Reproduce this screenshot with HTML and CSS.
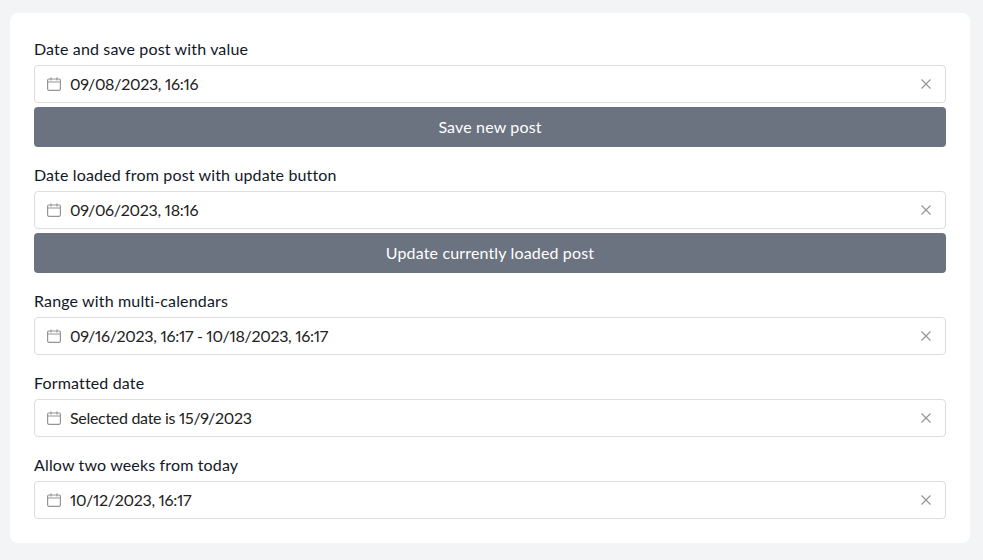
FILE: index.html
```html
<!DOCTYPE html>
<html lang="en">
<head>
    <meta charset="UTF-8">
    <meta name="viewport" content="width=device-width, initial-scale=1">
    <title>Date picker</title>
    <link rel="stylesheet" href="styles.css">
</head>
<body>
    <svg class="sprite" xmlns="http://www.w3.org/2000/svg" width="0" height="0">
        <symbol id="icon-calendar" viewBox="0 0 14 14">
            <path d="M1.8 2h10.4a1.2 1.2 0 0 1 1.2 1.2v8.9a1.2 1.2 0 0 1-1.2 1.2H1.8a1.2 1.2 0 0 1-1.2-1.2V3.2A1.2 1.2 0 0 1 1.8 2zM.6 5h12.8M4 .4v3M10 .4v3"/>
        </symbol>
        <symbol id="icon-clear" viewBox="0 0 12 12">
            <path d="M1.5 1.5l9 9M10.5 1.5l-9 9"/>
        </symbol>
    </svg>
    <div class="card">
        <div class="field">
            <label class="field__label">Date and save post with value</label>
            <div class="picker">
                <svg class="picker__calendar"><use href="#icon-calendar"/></svg>
                <span class="picker__value">09/08/2023, 16:16</span>
                <svg class="picker__clear"><use href="#icon-clear"/></svg>
            </div>
            <button class="btn">Save new post</button>
        </div>
        <div class="field">
            <label class="field__label">Date loaded from post with update button</label>
            <div class="picker">
                <svg class="picker__calendar"><use href="#icon-calendar"/></svg>
                <span class="picker__value">09/06/2023, 18:16</span>
                <svg class="picker__clear"><use href="#icon-clear"/></svg>
            </div>
            <button class="btn">Update currently loaded post</button>
        </div>
        <div class="field">
            <label class="field__label">Range with multi-calendars</label>
            <div class="picker">
                <svg class="picker__calendar"><use href="#icon-calendar"/></svg>
                <span class="picker__value">09/16/2023, 16:17 - 10/18/2023, 16:17</span>
                <svg class="picker__clear"><use href="#icon-clear"/></svg>
            </div>
        </div>
        <div class="field">
            <label class="field__label">Formatted date</label>
            <div class="picker">
                <svg class="picker__calendar"><use href="#icon-calendar"/></svg>
                <span class="picker__value">Selected date is 15/9/2023</span>
                <svg class="picker__clear"><use href="#icon-clear"/></svg>
            </div>
        </div>
        <div class="field">
            <label class="field__label">Allow two weeks from today</label>
            <div class="picker">
                <svg class="picker__calendar"><use href="#icon-calendar"/></svg>
                <span class="picker__value">10/12/2023, 16:17</span>
                <svg class="picker__clear"><use href="#icon-clear"/></svg>
            </div>
        </div>
    </div>
</body>
</html>
```

FILE: styles.css
```css
body {
    background-color: #f3f4f6;
    color: #111827;
    font-family: Lato, "Noto Sans", sans-serif;
    font-size: 16px;
    line-height: 24px;
    letter-spacing: 0.15px;
    margin: 0;
    padding: 13px 13px 17px 10px;
}

.sprite {
    display: block;
    position: absolute;
}

.card {
    background-color: #ffffff;
    border-radius: 8px;
    padding: 24px;
    display: flex;
    flex-direction: column;
    gap: 16px;
}

.field {
    display: flex;
    flex-direction: column;
}

.field__label {
    margin-bottom: 4px;
}

.picker {
    background-color: #ffffff;
    border: 1px solid #dddddd;
    border-radius: 4px;
    box-sizing: border-box;
    height: 38px;
    display: flex;
    align-items: center;
    padding: 0 12px;
}

.picker__calendar {
    width: 14px;
    height: 14px;
    fill: none;
    stroke: #959595;
    stroke-width: 1.2;
    flex: none;
}

.picker__value {
    margin-left: 9px;
    flex: 1;
    font-size: 16px;
    font-variant-numeric: proportional-nums;
    letter-spacing: -0.3px;
    color: #212121;
}

.picker__clear {
    width: 12px;
    height: 12px;
    fill: none;
    stroke: #959595;
    stroke-width: 1.2;
    flex: none;
    margin-right: 1px;
}

.btn {
    background-color: #6b7280;
    border: none;
    border-radius: 4px;
    color: #ffffff;
    font-family: inherit;
    font-size: 16px;
    letter-spacing: inherit;
    height: 40px;
    margin-top: 4px;
    padding: 0 0 2px;
}
```
